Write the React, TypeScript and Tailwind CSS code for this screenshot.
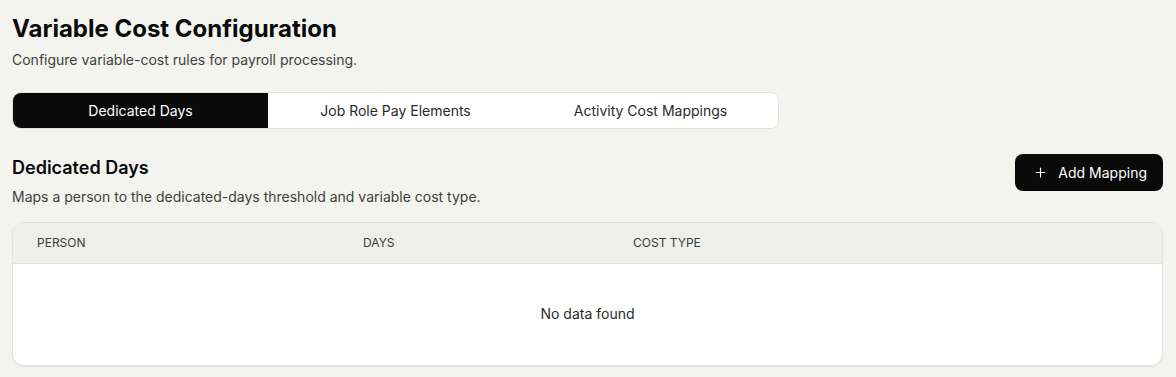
import { Plus } from "lucide-react"
import { useState } from "react"

const tabs = ["Dedicated Days", "Job Role Pay Elements", "Activity Cost Mappings"]

export default function App() {
  const [active, setActive] = useState(0)

  return (
    <main className="min-h-screen bg-[#f3f3ef] px-3 pt-[13px] text-[#0a0a0a]" style={{ fontFamily: "Inter, 'Noto Sans', sans-serif" }}>
      <h1 className="text-2xl font-bold leading-8">Variable Cost Configuration</h1>
      <p className="mt-[5px] text-sm text-[#3f3f3f]">Configure variable-cost rules for payroll processing.</p>

      <div className="mt-[22px] flex w-[767px] rounded-lg border border-[#e2e2dc] bg-white">
        {tabs.map((t, i) => (
          <button
            key={t}
            onClick={() => setActive(i)}
            className={
              "h-[35px] flex-1 text-sm " +
              (active === i ? "rounded-l-lg bg-[#0a0a0a] text-white" : "text-[#2a2a2a]")
            }
          >
            {t}
          </button>
        ))}
      </div>

      <div className="mt-[25px] flex items-start justify-between">
        <div>
          <h2 className="text-lg font-semibold leading-7">Dedicated Days</h2>
          <p className="mt-[5px] text-sm text-[#3f3f3f]">Maps a person to the dedicated-days threshold and variable cost type.</p>
        </div>
        <button className="mr-[1px] flex h-[37px] items-center gap-2.5 rounded-lg bg-[#0a0a0a] pl-[18px] pr-4 text-sm text-white">
          <Plus size={15} strokeWidth={1.8} />
          Add Mapping
        </button>
      </div>

      <div className="mr-[1px] mt-[15px] overflow-hidden rounded-xl border border-[#e2e2dc] bg-white shadow-[0_1px_2px_rgba(0,0,0,0.06)]">
        <table className="w-full border-collapse text-left">
          <thead>
            <tr className="h-[40px] border-b border-[#e2e2dc] bg-[#efefea] text-xs uppercase text-[#3a3a3a]">
              <th className="w-[350px] pl-6 font-normal">Person</th>
              <th className="w-[270px] font-normal">Days</th>
              <th className="font-normal">Cost Type</th>
            </tr>
          </thead>
          <tbody>
            <tr>
              <td colSpan={3} className="h-[102px] text-center text-sm text-[#2a2a2a]">No data found</td>
            </tr>
          </tbody>
        </table>
      </div>
    </main>
  )
}
